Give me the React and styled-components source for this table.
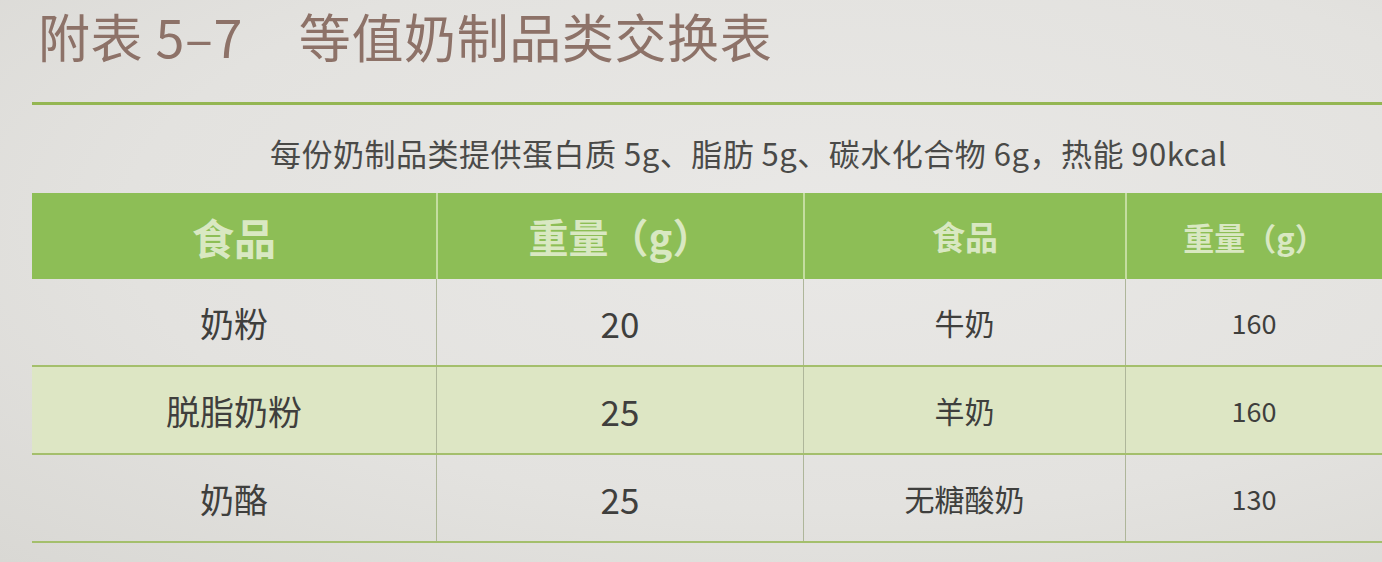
import React from 'react';
import styled, { createGlobalStyle } from 'styled-components';

const GlobalStyle = createGlobalStyle`
  html, body {
    margin: 0;
    padding: 0;
    background: #e4e3e0;
    overflow: hidden;
  }
`;

const FONT = `"Noto Sans CJK SC", "Noto Sans", sans-serif`;

const columns = [
  { width: 404, head: 42, body: 34 },
  { width: 367, head: 40, body: 35 },
  { width: 322, head: 33, body: 30 },
  { width: 257, head: 31, body: 27 },
];

const rows = [
  ['奶粉', '20', '牛奶', '160'],
  ['脱脂奶粉', '25', '羊奶', '160'],
  ['奶酪', '25', '无糖酸奶', '130'],
];

const App = () => (
  <>
    <GlobalStyle />
    <Page>
      <Title>
        <span>附表 5–7</span>
        <span>等值奶制品类交换表</span>
      </Title>
      <Rule />
      <Caption>每份奶制品类提供蛋白质 5g、脂肪 5g、碳水化合物 6g，热能 90kcal</Caption>
      <Table>
        <HeadRow>
          {['食品', '重量（g）', '食品', '重量（g）'].map((t, i) => (
            <HeadCell key={i} w={columns[i].width} size={columns[i].head}>
              {t}
            </HeadCell>
          ))}
        </HeadRow>
        {rows.map((row, r) => (
          <BodyRow key={r} alt={r === 1}>
            {row.map((t, i) => (
              <BodyCell key={i} w={columns[i].width} size={columns[i].body}>
                {t}
              </BodyCell>
            ))}
          </BodyRow>
        ))}
      </Table>
    </Page>
  </>
);

const Page = styled.div`
  width: 1382px;
  height: 562px;
  padding-left: 32px;
  box-sizing: border-box;
  background: radial-gradient(ellipse at 60% 40%, #e9e8e6 0%, #e3e2df 60%, #d9d8d4 100%);
  font-family: ${FONT};
`;

const Title = styled.div`
  display: flex;
  gap: 56px;
  padding: 4px 0 0 6px;
  height: 68px;
  box-sizing: border-box;
  font-size: 52px;
  line-height: 64px;
  color: #8d7268;
  letter-spacing: 0.6px;
  white-space: nowrap;
`;

const Rule = styled.div`
  margin-top: 34px;
  height: 3px;
  background: #94b652;
`;

const Caption = styled.div`
  height: 88px;
  box-sizing: border-box;
  padding: 28px 0 0 238px;
  font-size: 31px;
  line-height: 40px;
  color: #4a4a48;
  white-space: nowrap;
  letter-spacing: 0.5px;
`;

const Table = styled.div`
  display: flex;
  flex-direction: column;
`;

const HeadRow = styled.div`
  display: flex;
  height: 86px;
  background: #8dbe56;
`;

const HeadCell = styled.div`
  width: ${p => p.w}px;
  flex-shrink: 0;
  display: flex;
  align-items: center;
  justify-content: center;
  font-size: ${p => p.size}px;
  font-weight: 700;
  color: #d9e8c2;
  box-sizing: border-box;
  & + & {
    border-left: 2px solid #c4dda0;
  }
`;

const BodyRow = styled.div`
  display: flex;
  height: 86px;
  background: ${p => (p.alt ? '#dde6c4' : 'transparent')};
  border-bottom: 2px solid #a4bf6c;
`;

const BodyCell = styled.div`
  width: ${p => p.w}px;
  flex-shrink: 0;
  display: flex;
  align-items: center;
  justify-content: center;
  font-size: ${p => p.size}px;
  color: #3f3f3d;
  box-sizing: border-box;
  & + & {
    border-left: 1px solid #aeb69a;
  }
`;

export default App;
